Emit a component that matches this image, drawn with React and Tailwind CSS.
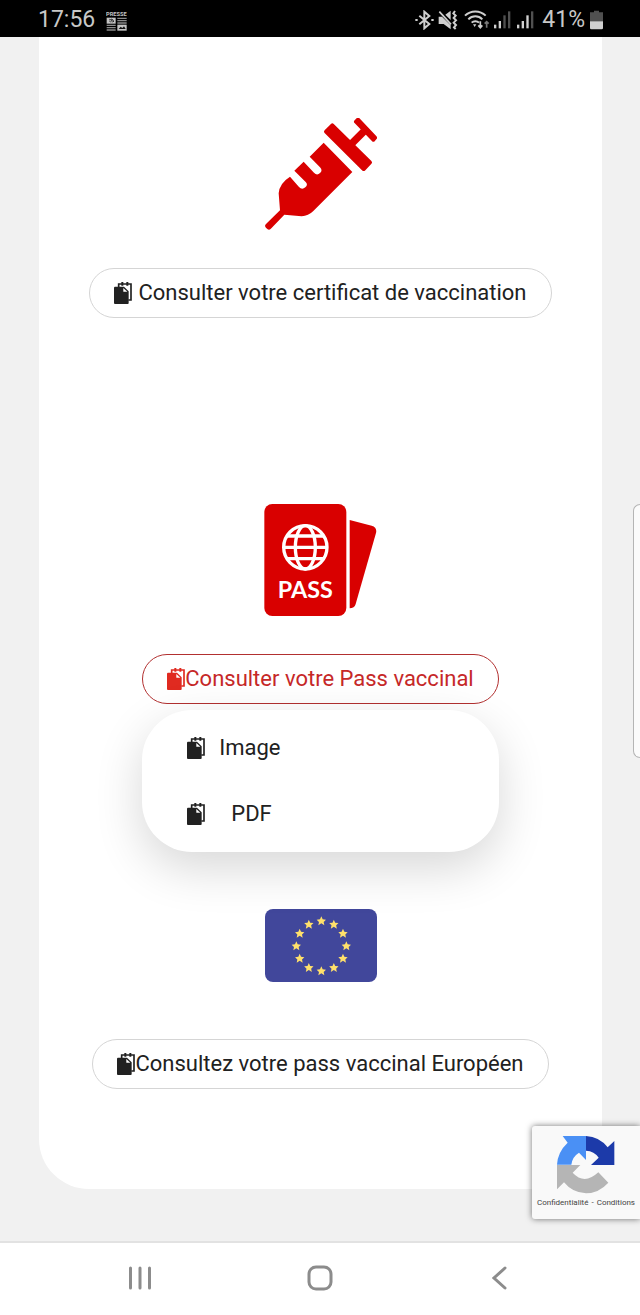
import React, { useState } from "react";

const PresseIcon = () => (
  <svg className="w-[21px] h-[21px]" viewBox="0 0 63 63" fill="#c4c4c4" aria-hidden="true">
    <text x="0" y="17" fontFamily="Roboto, sans-serif" fontWeight="700" fontSize="17">
      PRESSE
    </text>
    <rect x="2" y="23" width="27" height="18" />
    <path d="M10 28a9 9 0 0 1 9 9M10 33a5 5 0 0 1 4 4M15 27a9 9 0 0 1 8 9" fill="none" stroke="#111" strokeWidth="2.5" />
    <path d="M34 23h28v4H34zM34 30h28v4H34zM34 37h28v4H34zM2 44h27v4H2zM2 51h27v4H2zM2 58h27v4H2z" opacity=".7" />
    <rect x="34" y="44" width="28" height="18" />
    <path d="M38 57l6-7 5 4 5-5 5 8z" fill="#111" />
  </svg>
);

const BluetoothIcon = () => (
  <svg className="w-[19px] h-5" viewBox="0 0 57 60" fill="none" stroke="#cfcfcf" strokeWidth="6" aria-hidden="true">
    <path d="M13 17l30 25-15 13V5l15 13-30 25" />
    <path d="M1 30h7M49 30h7" />
  </svg>
);

const MuteIcon = () => (
  <svg className="w-5 h-5" viewBox="0 0 60 60" fill="#cfcfcf" aria-hidden="true">
    <path d="M2 20h10L38 46v12L17 42H2zM22 14l16-12v28z" />
    <path d="M4 5l35 38" stroke="#cfcfcf" strokeWidth="5" />
    <path d="M51 3l-5 7 7 7-6 7 7 7-7 7 7 7-6 7 5 5" fill="none" stroke="#cfcfcf" strokeWidth="6" />
  </svg>
);

const WifiIcon = () => (
  <svg className="w-[26px] h-5" viewBox="0 0 78 60" fill="none" stroke="#cfcfcf" strokeWidth="6" aria-hidden="true">
    <path d="M3 17c17-17 45-17 62 0M13 28c12-12 30-12 42 0M23 38c6-6 16-6 22 0" />
    <path d="M27 43h10l-5 8z" fill="#cfcfcf" stroke="none" />
    <path d="M49 34v17M43 46l6 7 6-7" strokeWidth="5" />
    <path d="M68 53V36M62 41l6-6 6 6" stroke="#777" strokeWidth="5" />
  </svg>
);

const SignalIcon = ({ level }) => (
  <svg className="w-[17px] h-5" viewBox="0 0 51 60" aria-hidden="true">
    {[11, 22, 39, 51].map((h, i) => (
      <rect key={h} x={i * 14} y={55 - h} width="7" height={h} fill={i < level ? "#d0d0d0" : "#505050"} />
    ))}
  </svg>
);

const BatteryIcon = () => (
  <svg className="w-[13px] h-5" viewBox="0 0 39 60" aria-hidden="true">
    <path d="M12 2h15v5h12v27H0V7h12z" fill="#505050" />
    <path d="M0 34h39v20q0 4-4 4H4q-4 0-4-4z" fill="#d0d0d0" />
  </svg>
);

const SyringeIcon = () => (
  <svg className="w-28 h-28" viewBox="45 39 336 336" fill="#d90000" stroke="#d90000" strokeLinejoin="round" role="img" aria-label="Seringue">
    <path d="M228 80L247 61 360 172 341 192z" strokeWidth="12" />
    <path d="M318 50L324 44 375 98 370 104z" strokeWidth="12" />
    <path d="M341 80L302 119" strokeWidth="22" />
    <path
      stroke="none"
      d="M221 113L307 201 190 318Q175 333 155 334L103 329 64 370Q58 378 51 371 41 364 48 357L90 316 86 265Q88 235 120 215L147 246Q156 256 166 247 175 239 167 231L133 197 161 170 192 203Q201 213 210 204 219 196 210 187L179 155z"
    />
  </svg>
);

const PassIcon = () => (
  <svg className="w-[113px] h-28" viewBox="42 42 339 336" role="img" aria-label="Pass vaccinal">
    <rect x="43" y="42" width="246" height="336" rx="24" fill="#d90000" />
    <path d="M299 90l66 17q17 5 13 22l-61 213q-4 13-18 13z" fill="#d90000" />
    <g fill="none" stroke="#fff" strokeWidth="10">
      <circle cx="166" cy="172" r="65" />
      <ellipse cx="166" cy="172" rx="30" ry="65" />
      <path d="M101 172h130M110 138h112M110 206h112" />
    </g>
    <text x="166" y="325" textAnchor="middle" fill="#fff" fontFamily="Lato, sans-serif" fontWeight="700" fontSize="70">
      PASS
    </text>
  </svg>
);

const STAR = "M0-14L4-5 14-4 7 3 9 13 0 7-9 13-7 3-14-4-4-5z";

const EuropeFlag = () => (
  <svg className="w-28 h-[73px]" viewBox="0 0 336 219" role="img" aria-label="Union européenne">
    <rect width="336" height="219" rx="24" fill="#41479b" />
    {Array.from({ length: 12 }, (_, i) => {
      const angle = (i * Math.PI) / 6;
      const x = 169 + 75 * Math.sin(angle);
      const y = 111 - 75 * Math.cos(angle);
      return <path key={i} d={STAR} fill="#ffe06b" transform={`translate(${x} ${y})`} />;
    })}
  </svg>
);

const CopyIcon = ({ className = "" }) => (
  <svg className={`w-[18px] h-[22px] shrink-0 ${className}`} viewBox="0 0 54 66" fill="currentColor" aria-hidden="true">
    <path d="M14 15V6h37v48h-8" fill="none" stroke="currentColor" strokeWidth="5" />
    <path d="M22 0h6v11h-6zM37 0h6v11h-6z" />
    <path d="M3 14h27l14 14v35q0 3-3 3H3q-3 0-3-3V17q0-3 3-3z" />
    <path d="M28 18v11h12z" fill="#fff" />
  </svg>
);

const RecaptchaLogo = () => (
  <svg className="w-[58px] h-[58px]" viewBox="0 0 174 174" aria-hidden="true">
    <path d="M17 0h70v72L66 50Q46 62 43 86H0Q2 48 32 20z" fill="#4a90f5" />
    <path d="M87 0q40 2 65 34l20-19v72h-70l23-22Q112 45 87 44z" fill="#1c3aa9" />
    <path d="M0 87h70L47 110q35 38 77-1l30 31q-28 31-67 32-40-1-66-33L0 160z" fill="#b5b5b5" />
  </svg>
);

const PillButton = ({ label, spaced, active, ...props }) => (
  <button
    type="button"
    className={`flex items-center h-[50px] px-6 rounded-full border bg-white text-[22px] leading-7 whitespace-nowrap ${
      spaced ? "gap-1.5" : "gap-0"
    } ${active ? "border-[#b23030] text-[#c62828]" : "border-[#d5d5d5] text-[#212121]"}`}
    {...props}
  >
    <CopyIcon className={active ? "text-[#e02a20]" : ""} />
    {label}
  </button>
);

const StatusBar = () => (
  <header className="flex items-center justify-between h-[37px] shrink-0 pl-[38px] pr-[37px] bg-black text-[#c8c8c8] text-[23px] leading-7">
    <div className="flex items-center gap-[11px] pt-[3px]">
      <span>17:56</span>
      <PresseIcon />
    </div>
    <div className="flex items-center pt-[3px]">
      <BluetoothIcon />
      <span className="flex items-center ml-1 gap-[6px]">
        <MuteIcon />
        <WifiIcon />
      </span>
      <span className="flex items-center ml-1 gap-[6px]">
        <SignalIcon level={2} />
        <SignalIcon level={3} />
      </span>
      <span className="ml-2 mr-[5px]">41%</span>
      <BatteryIcon />
    </div>
  </header>
);

const NavigationBar = () => (
  <footer className="grid grid-cols-3 items-center h-[74px] shrink-0 px-[50px] pb-[3px] border-t-2 border-[#e2e2e2] bg-white text-[#8c8c8c]">
    <button type="button" aria-label="Applications récentes" className="justify-self-center">
      <svg className="w-6 h-6" viewBox="0 0 24 24" stroke="currentColor" strokeWidth="3" strokeLinecap="round">
        <path d="M2.500 2v20M12 2v20M21.500 2v20" />
      </svg>
    </button>
    <button type="button" aria-label="Accueil" className="justify-self-center">
      <svg className="w-[26px] h-[26px]" viewBox="0 0 26 26" fill="none" stroke="currentColor" strokeWidth="3">
        <rect x="2" y="2" width="22" height="22" rx="7" />
      </svg>
    </button>
    <button type="button" aria-label="Retour" className="justify-self-center">
      <svg className="w-4 h-6" viewBox="0 0 16 24" fill="none" stroke="currentColor" strokeWidth="3" strokeLinecap="round">
        <path d="M13 2L2 12l11 10" />
      </svg>
    </button>
  </footer>
);

const App = () => {
  const [menuOpen, setMenuOpen] = useState(true);

  return (
    <div className="flex flex-col min-h-screen bg-[#f1f1f1] font-['Roboto','Noto_Sans',sans-serif]">
      <StatusBar />

      <main className="relative grow overflow-hidden pl-[39px] pr-[38px] pb-[52px]">
        <div className="flex flex-col items-center rounded-b-[50px] bg-white pt-[81px] pb-[100px]">
          <section className="flex flex-col items-center gap-[38px]">
            <SyringeIcon />
            <PillButton label="Consulter votre certificat de vaccination" spaced />
          </section>

          <section className="flex flex-col items-center gap-[38px] mt-[186px]">
            <PassIcon />
            <div className="relative">
              <PillButton
                label="Consulter votre Pass vaccinal"
                active
                aria-expanded={menuOpen}
                onClick={() => setMenuOpen(!menuOpen)}
              />
              {/* Download format menu */}
              {menuOpen && (
                <ul className="absolute top-full inset-x-0 mt-[6px] py-[5px] rounded-[50px] bg-white text-[22px] leading-7 text-[#212121] shadow-[0_16px_48px_rgba(0,0,0,0.16)]">
                  <li>
                    <button type="button" className="flex items-center gap-[14px] w-full h-[66px] px-[45px]">
                      <CopyIcon />
                      Image
                    </button>
                  </li>
                  <li>
                    <button type="button" className="flex items-center gap-[26px] w-full h-[66px] px-[45px]">
                      <CopyIcon />
                      PDF
                    </button>
                  </li>
                </ul>
              )}
            </div>
          </section>

          <section className="flex flex-col items-center gap-[57px] mt-[205px]">
            <EuropeFlag />
            <PillButton label="Consultez votre pass vaccinal Européen" />
          </section>
        </div>

        {/* Edge panel handle */}
        <div className="absolute right-0 top-[467px] w-[7px] h-[254px] rounded-l-[8px] border border-r-0 border-[#b5b5b5] bg-[#fbfbfb]" />

        {/* reCAPTCHA badge */}
        <aside className="absolute right-0 bottom-[22px] flex flex-col items-center w-[108px] h-[93px] pt-[10px] rounded-l-[3px] bg-[#f9f9f9] shadow-[0_0_6px_rgba(0,0,0,0.55)]">
          <RecaptchaLogo />
          <p className="mt-1 text-[8px] leading-[10px] whitespace-nowrap text-[#444]">
            <a href="#confidentialite">Confidentialité</a>
            <span className="mx-[3px]">-</span>
            <a href="#conditions">Conditions</a>
          </p>
        </aside>
      </main>

      <NavigationBar />
    </div>
  );
};

export default App;
